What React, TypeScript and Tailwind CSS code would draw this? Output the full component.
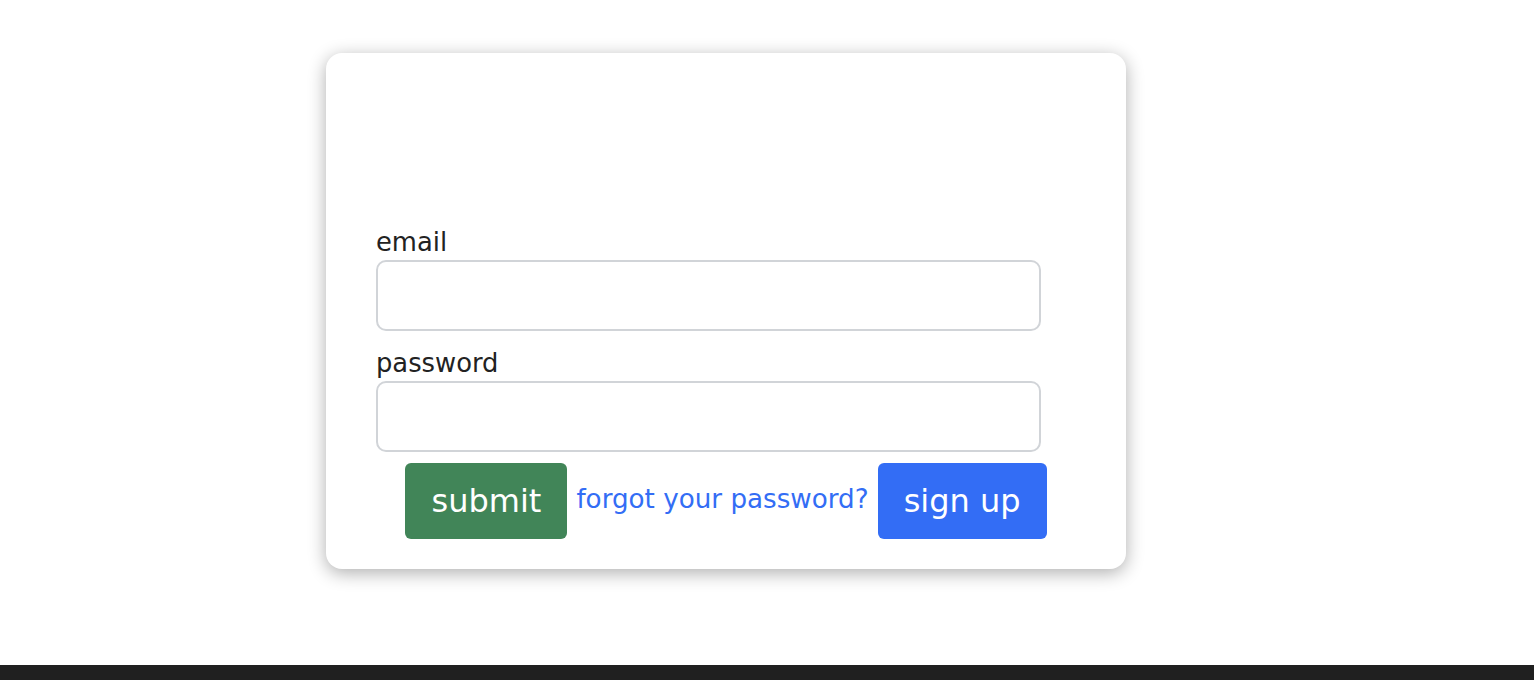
import React from "react"

export default function App() {
  return (
    <div className="min-h-[680px] bg-white font-['DejaVu_Sans',sans-serif] text-[#222]">
      <main className="h-[665px] pt-[53px]">
        <div className="ml-[326px] w-[800px] rounded-2xl bg-white shadow-[0_4px_18px_rgba(0,0,0,0.32)] px-[50px] pt-[174px] pb-[30px]">
          <form className="flex flex-col" onSubmit={(e) => e.preventDefault()}>
            <label className="text-[25.8px] leading-[30px]" htmlFor="email">email</label>
            <input
              id="email"
              type="email"
              className="mt-[3px] h-[71px] w-[665px] rounded-[10px] border-2 border-[#d1d4d8] outline-none"
            />
            <label className="mt-[17px] text-[25.8px] leading-[30px]" htmlFor="password">password</label>
            <input
              id="password"
              type="password"
              className="mt-[3px] h-[71px] w-[665px] rounded-[10px] border-2 border-[#d1d4d8] outline-none"
            />
            <div className="mt-[11px] -mx-[50px] flex items-center justify-center gap-[9px]">
              <button className="h-[76px] w-[162px] rounded-[6px] bg-[#418558] text-[32px] text-white">submit</button>
              <a href="#" className="-mt-[3px] text-[26.2px] text-[#336df5]">forgot your password?</a>
              <button className="h-[76px] w-[169px] rounded-[6px] bg-[#336df5] text-[32px] text-white">sign up</button>
            </div>
          </form>
        </div>
      </main>
      <footer className="h-[15px] bg-[#202020]" />
    </div>
  )
}
